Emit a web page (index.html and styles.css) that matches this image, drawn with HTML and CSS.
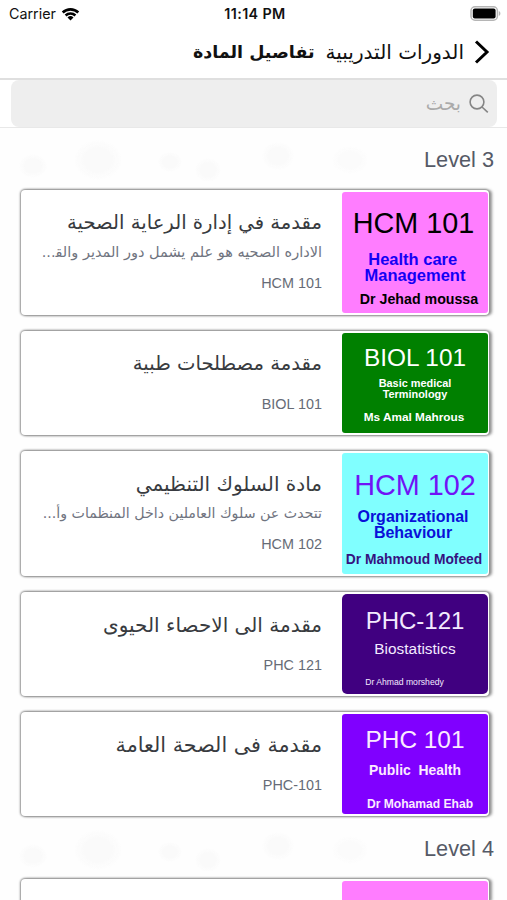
FILE: index.html
```
<!DOCTYPE html>
<html lang="ar" dir="rtl">
<head>
  <meta charset="UTF-8">
  <meta name="viewport" content="width=device-width, initial-scale=1.0">
  <title>تفاصيل المادة</title>
  <link rel="stylesheet" href="styles.css">
</head>
<body>
  <div class="status-bar" dir="ltr">
    <div class="carrier">
      <span>Carrier</span>
      <svg width="19" height="14" viewBox="0 0 18 14">
        <path d="M0.3 4.6a12.4 12.4 0 0 1 17.4 0l-1.8 1.9a9.8 9.8 0 0 0-13.8 0z"/>
        <path d="M3.2 7.5a8.3 8.3 0 0 1 11.6 0l-1.8 1.9a5.7 5.7 0 0 0-8 0z"/>
        <path d="M6 10.4a4.3 4.3 0 0 1 6 0l-3 3.2z"/>
      </svg>
    </div>
    <div class="clock">11:14 PM</div>
    <svg class="battery" width="31" height="15" viewBox="0 0 31 15">
      <rect x="1" y="0.8" width="26.4" height="13.4" rx="4" fill="#fff" stroke="#b5b5b5" stroke-width="1.5"/>
      <rect x="2.8" y="2.6" width="22.8" height="9.8" rx="2"/>
      <path d="M28.8 5v5c1-.4 1.6-1.3 1.6-2.500s-.6-2.100-1.600-2.500z" fill="#b5b5b5"/>
    </svg>
  </div>

  <div class="header">
    <svg class="back" width="16" height="24" viewBox="0 0 16 24">
      <path d="M2 1.500L13 12 2 22.500" fill="none" stroke="#000" stroke-width="3"/>
    </svg>
    <span class="back-title">الدورات التدريبية</span>
    <h1>تفاصيل المادة</h1>
  </div>

  <div class="search">
    <div class="search-box">
      <svg width="20" height="20" viewBox="0 0 20 20" fill="none" stroke="#858585" stroke-width="1.600">
        <circle cx="8" cy="8" r="6.900"/>
        <path d="M13 13l5.800 5.300"/>
      </svg>
      <span>بحث</span>
    </div>
  </div>

  <div class="list">
    <h2>Level 3</h2>

    <div class="card tall">
      <div class="cover hcm101">
        <div class="cover-code">HCM 101</div>
        <div class="cover-name">Health care&nbsp;<br>Management</div>
        <div class="cover-author">Dr Jehad moussa</div>
      </div>
      <div class="info">
        <h3>مقدمة في إدارة الرعاية الصحية</h3>
        <p>الاداره الصحيه هو علم يشمل دور المدير والق&zwj;...</p>
        <div class="code">HCM 101</div>
      </div>
    </div>

    <div class="card">
      <div class="cover biol101">
        <div class="cover-code">BIOL 101</div>
        <div class="cover-name">Basic medical<br>Terminology</div>
        <div class="cover-author">Ms Amal Mahrous</div>
      </div>
      <div class="info">
        <h3>مقدمة مصطلحات طبية</h3>
        <div class="code">BIOL 101</div>
      </div>
    </div>

    <div class="card tall">
      <div class="cover hcm102">
        <div class="cover-code">HCM 102</div>
        <div class="cover-name">Organizational<br>Behaviour</div>
        <div class="cover-author">Dr Mahmoud Mofeed</div>
      </div>
      <div class="info">
        <h3 class="wide">مادة السلوك التنظيمي</h3>
        <p class="narrow">تتحدث عن سلوك العاملين داخل المنظمات وأ...</p>
        <div class="code">HCM 102</div>
      </div>
    </div>

    <div class="card">
      <div class="cover phc121">
        <div class="cover-code">PHC-121</div>
        <div class="cover-name">Biostatistics</div>
        <div class="cover-author">Dr Ahmad morshedy</div>
      </div>
      <div class="info">
        <h3 class="wide">مقدمة الى الاحصاء الحيوى</h3>
        <div class="code">PHC 121</div>
      </div>
    </div>

    <div class="card">
      <div class="cover phc101">
        <div class="cover-code">PHC 101</div>
        <div class="cover-name">Public&nbsp; Health</div>
        <div class="cover-author">Dr Mohamad Ehab</div>
      </div>
      <div class="info">
        <h3 class="wider">مقدمة فى الصحة العامة</h3>
        <div class="code">PHC-101</div>
      </div>
    </div>

    <h2 class="next-level">Level 4</h2>

    <div class="card last">
      <div class="cover next"></div>
    </div>
  </div>
</body>
</html>
```
FILE: styles.css
```
* {
  margin: 0;
  padding: 0;
  box-sizing: border-box;
}

body {
  height: 900px;
  overflow: hidden;
  display: flex;
  flex-direction: column;
  background-color: #fff;
  font-family: "Liberation Sans", "DejaVu Sans", sans-serif;
}

svg {
  display: block;
  flex: none;
}

.status-bar {
  flex: none;
  height: 27px;
  padding: 0 6px 0 9px;
  display: grid;
  grid-template-columns: 1fr auto 1fr;
  align-items: center;
  font-family: Inter, sans-serif;
  font-size: 14.3px;
  color: #111;
}

.carrier {
  display: flex;
  align-items: center;
  gap: 5px;
}

.clock {
  font-size: 14.3px;
  font-weight: 600;
  letter-spacing: 0.4px;
}

.battery {
  justify-self: end;
}

.header {
  flex: none;
  height: 53px;
  padding: 1px 17px 2px;
  display: flex;
  align-items: center;
  border-bottom: 2px solid #dfdfdf;
  font-family: "DejaVu Sans", sans-serif;
  color: #111;
  white-space: nowrap;
}

.back-title {
  margin-right: 10px;
  font-size: 20px;
}

.header h1 {
  margin-right: 11px;
  font-size: 17.5px;
}

.search {
  flex: none;
  height: 48px;
  padding: 0 10px 0 11px;
  border-bottom: 1px solid #e8e8e8;
}

.search-box {
  height: 47px;
  padding: 0 8px;
  display: flex;
  align-items: center;
  gap: 8px;
  border-radius: 8px;
  background-color: #eee;
  color: #aaa;
  font-family: "DejaVu Sans", sans-serif;
  font-size: 18.5px;
}

/* faint doodles behind the list, repeated down the page */
.list {
  flex: 1;
  min-height: 0;
  overflow: hidden;
  padding: 16px 13px 0 21px;
  background-color: #fefefe;
  background-image:
    radial-gradient(14px 12px at 33px 38px, #fafafa 60%, transparent),
    radial-gradient(24px 20px at 98px 32px, #fafafa 60%, transparent),
    radial-gradient(12px 10px at 170px 34px, #fafafa 60%, transparent),
    radial-gradient(13px 12px at 208px 42px, #fafafa 60%, transparent),
    radial-gradient(16px 14px at 278px 28px, #fafafa 60%, transparent),
    radial-gradient(18px 14px at 350px 32px, #fbfbfb 60%, transparent);
  background-size: 507px 690px;
}

.list h2 {
  height: 45.500px;
  line-height: 31px;
  font-size: 21.7px;
  font-weight: normal;
  color: #555a66;
}

.list .next-level {
  height: 47px;
  line-height: 34px;
}

.card {
  height: 104px;
  margin: 0 5px 16px 0;
  display: flex;
  border-radius: 4px;
  background-color: #fff;
  box-shadow: 0 0 2px 1px #909090, 3px 0 3px #999;
}

.card.tall {
  height: 125px;
}

.card.last {
  height: 22px;
  margin-bottom: 0;
  border-radius: 4px 4px 0 0;
}

.cover {
  flex: none;
  width: 146px;
  margin: 2px 1px;
  display: flex;
  flex-direction: column;
  align-items: center;
  border-radius: 3px;
  direction: ltr;
  text-align: center;
  white-space: nowrap;
}

.cover-code {
  line-height: 26px;
  font-size: 24.4px;
}

.cover-name,
.cover-author {
  font-weight: bold;
}

.hcm101 {
  padding-top: 16px;
  background-color: #ff7dff;
  color: #000;
}

.hcm101 .cover-code,
.hcm102 .cover-code {
  line-height: 30px;
  font-size: 28.8px;
}

.hcm101 .cover-code {
  padding-right: 3px;
}

.hcm101 .cover-name {
  margin-top: 13px;
  line-height: 16.3px;
  font-size: 16.5px;
  color: #1400f5;
}

.hcm101 .cover-author {
  margin-top: 8px;
  padding-left: 8px;
  line-height: 16px;
  font-size: 14.2px;
}

.biol101 {
  padding-top: 12px;
  background-color: #008000;
  color: #fff;
}

.biol101 .cover-name {
  margin-top: 7px;
  line-height: 11px;
  font-size: 10.9px;
}

.biol101 .cover-author {
  margin-top: 10px;
  padding-right: 2px;
  line-height: 14px;
  font-size: 11.8px;
}

.hcm102 {
  padding-top: 17px;
  background-color: #80ffff;
  color: #35127f;
}

.hcm102 .cover-code {
  color: #7014f5;
}

.hcm102 .cover-name {
  margin-top: 9px;
  padding-right: 4px;
  line-height: 16px;
  font-size: 16px;
  color: #0a10d8;
}

.hcm102 .cover-author {
  margin-top: 11px;
  padding-right: 2px;
  line-height: 16px;
  font-size: 13.8px;
}

.phc121 {
  padding-top: 14px;
  border-radius: 5px;
  background-color: #400080;
  color: #f3eaff;
}

.phc121 .cover-code {
  font-size: 24px;
}

.phc121 .cover-name {
  margin-top: 6px;
  line-height: 18px;
  font-size: 15.4px;
  font-weight: normal;
}

.phc121 .cover-author {
  margin-top: 19px;
  padding-right: 21px;
  line-height: 10px;
  font-size: 8.65px;
  font-weight: normal;
}

.phc101 {
  padding-top: 13px;
  background-color: #8000ff;
  color: #fbeaff;
}

.phc101 .cover-name {
  margin-top: 9px;
  line-height: 16px;
  font-size: 13.9px;
}

.phc101 .cover-author {
  margin-top: 19px;
  padding-left: 10px;
  line-height: 14px;
  font-size: 12.1px;
}

.next {
  margin-bottom: 0;
  border-radius: 3px 3px 0 0;
  background-color: #ff7dff;
}

.info {
  flex: 1;
  padding: 18px 19px 0 0;
  white-space: nowrap;
}

.info h3 {
  height: 32px;
  line-height: 30px;
  font-family: "DejaVu Sans", sans-serif;
  font-size: 19.6px;
  font-weight: normal;
  color: #383b40;
}

.info h3.wide {
  font-size: 20px;
}

.info h3.wider {
  font-size: 20.7px;
}

.info p {
  height: 31px;
  line-height: 24px;
  font-family: "DejaVu Sans", sans-serif;
  font-size: 14.5px;
  color: #70747f;
}

.info p.narrow {
  font-size: 14.2px;
}

.info .code {
  line-height: 24px;
  font-size: 14.4px;
  color: #666b76;
}

.info h3 + .code {
  margin-top: 11px;
}
```
